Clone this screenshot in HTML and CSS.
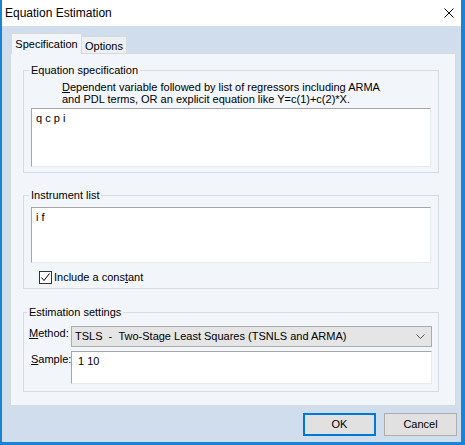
FILE: index.html
```html
<!DOCTYPE html>
<html>
<head>
<meta charset="utf-8">
<title>Equation Estimation</title>
<link rel="stylesheet" href="styles.css">
</head>
<body>
<div class="window">
  <div class="titlebar">
    <span class="title">Equation Estimation</span>
    <svg class="close" width="10" height="10" viewBox="0 0 10 10"><path d="M0.5 0.5L9.5 9.5M9.5 0.5L0.5 9.5" stroke="#000" stroke-width="1" fill="none"/></svg>
  </div>
  <div class="client">
    <div class="tabs">
      <div class="tab active">Specification</div>
      <div class="tab">Options</div>
    </div>
    <div class="panel">
      <fieldset class="group g1">
        <legend>Equation specification</legend>
        <p class="desc"><u>D</u>ependent variable followed by list of regressors including ARMA<br>and PDL terms, OR an explicit equation like Y=c(1)+c(2)*X.</p>
        <div class="edit e1">q c p i</div>
      </fieldset>
      <fieldset class="group g2">
        <legend>Instrument list</legend>
        <div class="edit e2">i f</div>
        <label class="check">
          <span class="box"><svg width="11" height="11" viewBox="0 0 11 11"><path d="M1.5 5.5L4 8.5L9.5 1.5" stroke="#000" stroke-width="1" fill="none"/></svg></span>
          <span>Include a cons<u>t</u>ant</span>
        </label>
      </fieldset>
      <fieldset class="group g3">
        <legend>Estimation settings</legend>
        <div class="settings">
          <span class="lbl lbl-method"><u>M</u>ethod:</span>
          <div class="combo">
            <span>TSLS&nbsp; - &nbsp;Two-Stage Least Squares (TSNLS and ARMA)</span>
            <svg width="9" height="5" viewBox="0 0 9 5"><path d="M0.5 0.5L4.5 4.5L8.5 0.5" stroke="#555" stroke-width="1" fill="none"/></svg>
          </div>
          <span class="lbl lbl-sample"><u>S</u>ample:</span>
          <div class="edit e3">1 10</div>
        </div>
      </fieldset>
    </div>
    <div class="buttons">
      <div class="btn default">OK</div>
      <div class="btn">Cancel</div>
    </div>
  </div>
</div>
</body>
</html>
```
FILE: styles.css
```css
* { box-sizing: border-box; }
html, body { margin: 0; padding: 0; }
body {
  font-family: "Liberation Sans", Arial, sans-serif;
  font-size: 11px;
  line-height: 13px;
  color: #000;
  background: #d0dded;
}
.window {
  width: 465px;
  height: 445px;
  border-left: 2px solid #1883d7;
  border-right: 4px solid #1883d7;
  border-bottom: 3px solid #1883d7;
  background: #d0dded;
  display: flex;
  flex-direction: column;
}
.titlebar {
  flex: none;
  height: 26px;
  background: #fff;
  display: flex;
  align-items: center;
  justify-content: space-between;
  padding: 0 7px 0 3px;
  font-size: 12px;
}
.title { padding-top: 1px; }
.client {
  flex: 1;
  padding: 7px 4px 0 8px;
  display: flex;
  flex-direction: column;
}
.tabs {
  display: flex;
  align-items: flex-end;
  height: 20px;
  margin-left: 1px;
}
.tab {
  border: 1px solid #d9d9d9;
  border-bottom: none;
  text-align: center;
}
.tab.active {
  width: 71px;
  height: 21px;
  margin-bottom: -1px;
  background: #f2f5fa;
  position: relative;
  z-index: 1;
  padding-top: 4px;
}
.tab:not(.active) {
  width: 45px;
  height: 17px;
  background: #ecf0f5;
  border-left: none;
  padding-top: 3px;
}
.panel {
  width: 446px;
  height: 353px;
  background: #f2f5fa;
  border: 1px solid #d9d9d9;
  padding: 10px 16px 0 12px;
  display: flex;
  flex-direction: column;
}
.group {
  margin: 0;
  border: 1px solid #d6dce4;
  min-width: 0;
}
.group legend {
  padding: 0 2px;
  margin-left: 0;
  line-height: 13px;
}
.g1 { padding: 4px 7px 5px 5px; }
.g2 { padding: 5px 7px 1px 5px; margin-top: 16px; }
.g3 { padding: 7px 6px 7px 3px; margin-top: 17px; }
.desc {
  margin: 0 0 3px 33px;
  line-height: 12px;
}
.edit {
  background: #fff;
  border-top: 1px solid #a6a6a6;
  border-left: 1px solid #a6a6a6;
  border-right: 1px solid #e6e9ed;
  border-bottom: 1px solid #e6e9ed;
  padding: 3px 4px;
  margin-left: 2px;
}
.e1 { height: 59px; }
.e2 { height: 56px; }
.check {
  display: flex;
  align-items: center;
  height: 20px;
  margin-top: 4px;
  margin-left: 10px;
  gap: 2px;
}
.box {
  width: 13px;
  height: 13px;
  border: 1px solid #333;
  background: #fff;
  display: flex;
}
.settings {
  display: grid;
  grid-template-columns: 44px 1fr;
  row-gap: 4px;
  align-items: start;
}
.lbl-method { margin-top: 1px; margin-left: 2px; }
.lbl-sample { margin-top: 2px; margin-left: 4px; }
.combo {
  height: 21px;
  background: #e5e5e5;
  border: 1px solid #acacac;
  display: flex;
  align-items: center;
  justify-content: space-between;
  padding: 0 6px 0 3px;
}
.e3 {
  margin-left: 0;
  height: 33px;
  padding: 3px 6px;
}
.buttons {
  display: flex;
  justify-content: flex-end;
  gap: 8px;
  margin-top: 7px;
}
.btn {
  width: 73px;
  height: 23px;
  background: #e1e1e1;
  border: 1px solid #adadad;
  display: flex;
  align-items: center;
  justify-content: center;
}
.btn.default { border: 2px solid #0078d7; }
```
